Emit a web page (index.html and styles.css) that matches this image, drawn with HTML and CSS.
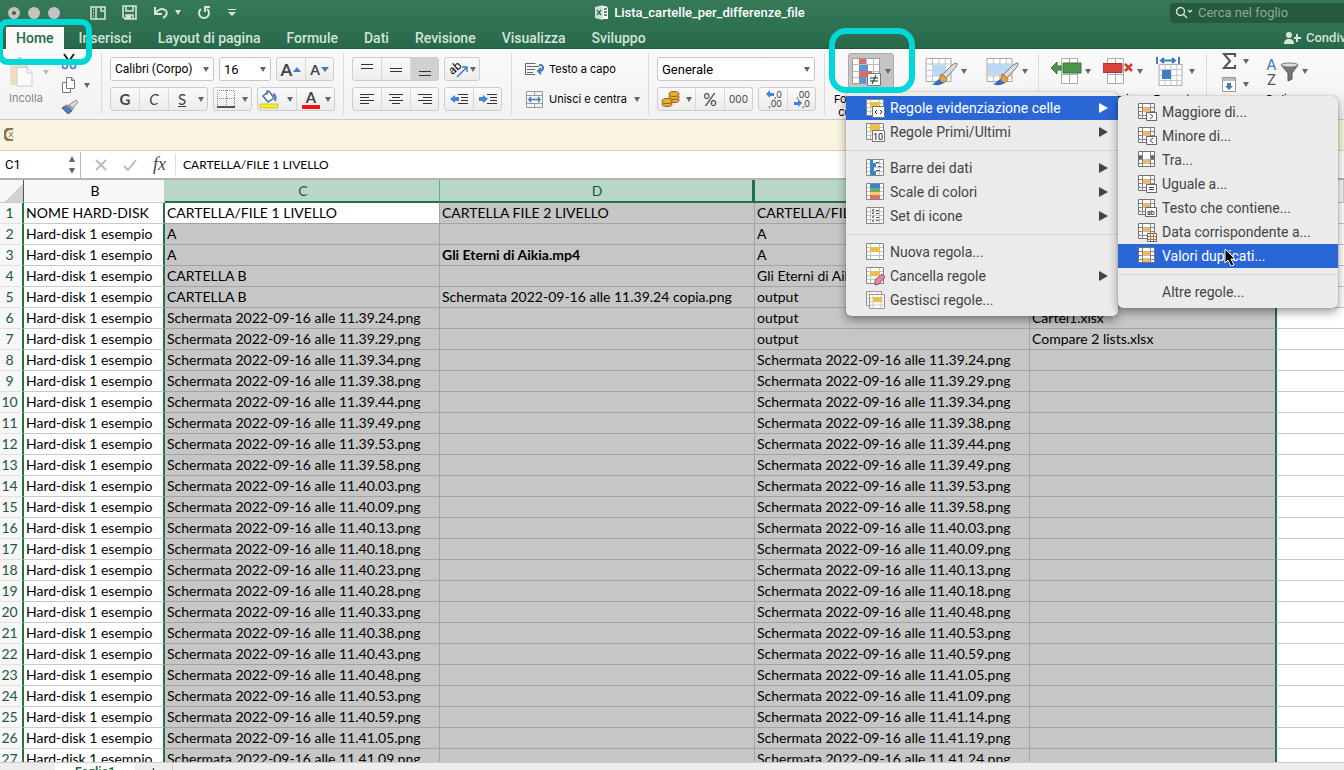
FILE: index.html
```html
<!DOCTYPE html>
<html lang="it">
<head>
  <meta charset="UTF-8" />
  <meta name="viewport" content="width=device-width, initial-scale=1.0"/>
  <title>Lista_cartelle_per_differenze_file</title>
  <link rel="stylesheet" href="styles.css">
</head>
<body>
  <!-- shared icon shapes -->
  <svg class="defs" width="0" height="0">
    <symbol id="cells" viewBox="0 0 18 17">
      <path d="M.5.5h17v16H.5z" fill="#fff" stroke="#858585"/>
      <path d="M4.500 1v15M13.500 1v15M1 4.500h16M1 8.500h16M1 12.500h16" stroke="#c4c4c4" fill="none"/>
    </symbol>
    <symbol id="rule" viewBox="0 0 19 18">
      <path d="M.5.5h16v15H.5z" fill="#fff" stroke="#747474"/>
      <path d="M4.500 1v14M12.500 1v14M1 4.500h15M1 8.500h15M1 12.500h15" stroke="#858585" fill="none"/>
      <path d="M5 4h7v5H5z" fill="#e8b970"/>
    </symbol>
    <symbol id="sheet" viewBox="0 0 28 26">
      <path d="M.5.5h27v25H.5z" fill="#fff" stroke="#9b9b9b"/>
      <path d="M7.500 1v24M14.500 1v24M21.500 1v24M1 6.500h26M1 13.500h26M1 19.500h26" stroke="#bcbcbc" fill="none"/>
    </symbol>
    <symbol id="brush" viewBox="0 0 26 24">
      <path d="M24 1c2 0 1 3-1 5l-9 10-4-3L20 3z" fill="#ddd" stroke="#777"/>
      <path d="M9 12l6 4c0 4-4 6-8 5z" fill="#e2a04a" stroke="#a9752e"/>
      <path d="M8 17c0 3 3 3 4 3-3 4-8 4-12 2 4-1 4-4 8-5z" fill="#2f6fc0"/>
    </symbol>
  </svg>

  <header class="titlebar">
    <div class="window-row">
      <div class="lights"><i class="dot active"></i><i class="dot"></i><i class="dot"></i></div>
      <div class="quick">
        <button aria-label="Raccolta"><svg width="16" height="14" fill="none" stroke="#d5e5dc" stroke-width="1.500"><path d="M1 1h14v12H1zM6 1v12M11 1v4h4M3 4h1M3 7h1M3 10h1"/></svg></button>
        <button aria-label="Salva"><svg width="15" height="15" fill="none" stroke="#d5e5dc" stroke-width="1.600"><path d="M1 1h13v13H3l-2-2zM4 1v5h7V1M4 14v-4h7v4"/><path d="M5 10h4v4H5z" fill="#d5e5dc" stroke="none"/></svg></button>
        <button class="undo" aria-label="Annulla"><svg width="16" height="13" fill="none" stroke="#d5e5dc" stroke-width="2"><path d="M2 1v7h7M2 8c3-5 7-6 10-4s2 6-2 8"/></svg><b class="caret"></b></button>
        <button aria-label="Ripeti"><svg width="14" height="14" fill="none" stroke="#d5e5dc" stroke-width="2"><path d="M4 3a5 5 0 1 0 6 0M13 1H8v5"/></svg></button>
        <button aria-label="Personalizza"><svg width="10" height="8" fill="#d5e5dc"><path d="M1 0h8v1H1zM1 3h8L5 7z"/></svg></button>
      </div>
      <div class="doc-title"><svg width="14" height="15"><path d="M5 1h6l2 2v11H5z" fill="#fff"/><path d="M0 2l8-2v15l-8-2z" fill="#cfe0d6"/><path d="M2 5l4 5M6 5l-4 5M9 4h3M9 7h3M9 10h3" stroke="#2b7350" stroke-width="1.300"/></svg><span>Lista_cartelle_per_differenze_file</span></div>
      <label class="search"><svg width="20" height="14" fill="none" stroke="#d5e5dc" stroke-width="1.400"><circle cx="5.500" cy="5.500" r="4"/><path d="M8 8l4 4M13 4l2 2 2-2"/></svg><input type="search" placeholder="Cerca nel foglio" aria-label="Cerca nel foglio"></label>
    </div>
    <nav class="tabs">
      <a href="#" class="current">Home</a>
      <a href="#">Inserisci</a>
      <a href="#">Layout di pagina</a>
      <a href="#">Formule</a>
      <a href="#">Dati</a>
      <a href="#">Revisione</a>
      <a href="#">Visualizza</a>
      <a href="#">Sviluppo</a>
      <button class="share"><svg width="17" height="12" fill="#d5e5dc"><circle cx="5" cy="3" r="3"/><path d="M0 12c0-4 2-5 5-5s5 1 5 5zM12 2h2v3h3v2h-3v3h-2V7h-2V5h2z"/></svg>Condividi</button>
    </nav>
  </header>

  <section class="ribbon">
    <div class="group clipboard">
      <button class="paste" disabled>
        <span><svg width="25" height="30"><rect x="1" y="3" width="18" height="25" rx="1" fill="#edddc5"/><path d="M6 5V2h2a2 2 0 0 1 5 0h2v3z" fill="#ccc"/><path d="M8 10.500h10l5 5V29H8z" fill="#fafafa" stroke="#ccc"/><path d="M18 10v6h5" fill="none" stroke="#ccc"/></svg><b class="caret"></b></span>
        Incolla
      </button>
      <div class="clip-tools">
        <button aria-label="Taglia"><svg width="16" height="17" fill="none"><path d="M3 1l7 10M13 1L6 11" stroke="#222" stroke-width="2"/><circle cx="4" cy="13" r="2.500" stroke="#3f7cc4" stroke-width="1.500"/><circle cx="12" cy="13" r="2.500" stroke="#3f7cc4" stroke-width="1.500"/></svg></button>
        <button aria-label="Copia"><svg width="16" height="16" fill="#fff" stroke="#777"><path d="M1.500 5.500h8v10h-8z"/><path d="M5.500.5h5l3 3v8h-8zM10.500.5v3h3"/></svg><b class="caret"></b></button>
        <button aria-label="Copia formato"><svg width="17" height="15"><path d="M15 0l2 2-5 6-4-3z" fill="#ddd" stroke="#888"/><path d="M6 4l7 5-2 2-7-5z" fill="#999"/><path d="M4 6l7 5-4 3-6-6z" fill="#4b83c4" stroke="#44658c"/></svg></button>
      </div>
    </div>

    <div class="group font-group">
      <div class="line">
        <label class="combo font-name"><select aria-label="Carattere"><option>Calibri (Corpo)</option></select></label>
        <label class="combo font-size"><select aria-label="Dimensione"><option>16</option></select></label>
        <div class="set"><button class="letter" aria-label="Aumenta">A<svg width="8" height="5"><path d="M0 5l4-5 4 5z" fill="#3f7cc4"/></svg></button><button class="letter small" aria-label="Riduci">A<svg width="8" height="5"><path d="M0 0h8L4 5z" fill="#3f7cc4"/></svg></button></div>
      </div>
      <div class="line">
        <div class="set"><button><b>G</b></button><button><i>C</i></button><button class="split"><u>S</u><b class="caret"></b></button></div>
        <div class="set"><button class="borders" aria-label="Bordi"><svg width="18" height="18" fill="none"><path d="M.5 17V.5h17V17M9.500 0v16M0 8.500h18" stroke="#888" stroke-dasharray="1 1"/><path d="M0 17h18" stroke="#222" stroke-width="1.500"/></svg><b class="caret"></b></button></div>
        <div class="set"><button class="split color" aria-label="Riempimento"><svg width="20" height="20"><path d="M4 7l6-5 5 7-6 4z" fill="#fff" stroke="#4c6f9c" stroke-width="1.500"/><path d="M14 5c3 1 3 4 2 7" stroke="#3f7cc4" stroke-width="2" fill="none"/><path d="M8 6V1" stroke="#555"/><path d="M1 15h18v4H1z" fill="#fcee21" stroke="#ccc24d"/></svg><b class="caret"></b></button><button class="split color" aria-label="Colore carattere"><span class="ink">A</span><b class="caret"></b></button></div>
      </div>
    </div>

    <div class="group align-group">
      <div class="line">
        <div class="set"><button aria-label="In alto"><svg class="lines" width="16" height="16"><path d="M2 3.500h12M2 7.500h12"/></svg></button><button aria-label="Al centro"><svg class="lines" width="16" height="16"><path d="M2 7.500h12M2 10.500h12"/></svg></button><button class="pressed" aria-label="In basso"><svg class="lines" width="16" height="16"><path d="M2 10.500h12M2 14.500h12"/></svg></button></div>
        <div class="set"><button class="orient" aria-label="Orientamento"><svg width="19" height="18"><text x="0" y="11" transform="rotate(-40 7 10)" class="svg-ab">ab</text><path d="M7 17l10-10M12 7h5v5" stroke="#3f7cc4" stroke-width="1.500" fill="none"/></svg><b class="caret"></b></button></div>
      </div>
      <div class="line">
        <div class="set"><button aria-label="Sinistra"><svg class="lines" width="16" height="12"><path d="M1 1.500h14M1 4.500h9M1 7.500h14M1 10.500h9"/></svg></button><button aria-label="Centra"><svg class="lines" width="16" height="12"><path d="M1 1.500h14M4 4.500h8M1 7.500h14M4 10.500h8"/></svg></button><button aria-label="Destra"><svg class="lines" width="16" height="12"><path d="M1 1.500h14M6 4.500h9M1 7.500h14M6 10.500h9"/></svg></button></div>
        <div class="set"><button aria-label="Riduci rientro"><svg class="lines" width="18" height="12"><path d="M8 1.500h10M11 4.500h7M11 7.500h7M8 10.500h10"/><path d="M0 6l5-4v2h4v4H5v2z" class="fill-blue"/></svg></button><button aria-label="Aumenta rientro"><svg class="lines" width="18" height="12"><path d="M8 1.500h10M11 4.500h7M11 7.500h7M8 10.500h10"/><path d="M9 6L4 2v2H0v4h4v2z" class="fill-blue"/></svg></button></div>
      </div>
    </div>

    <div class="group wrap-group">
      <button class="plain"><svg width="20" height="14" fill="none"><path d="M10 12.500H.5v-11h10M2 4.500h12M2 7.500h8M2 10.500h6" stroke="#666"/><path d="M14 3c5-1 6 6 0 6M16 6l-3 3 3 3" stroke="#3f7cc4" stroke-width="2"/></svg>Testo a capo</button>
      <button class="plain"><svg width="20" height="17" fill="none"><path d="M1.500.5h16v16h-16zM1 4.500h17M1 12.500h17M9.500 1v4M9.500 12v5" stroke="#999"/><path d="M4 8.500h11M6 6L4 8.500 6 11M13 6l2 2.500L13 11" stroke="#3f7cc4" stroke-width="1.500"/></svg>Unisci e centra<b class="caret"></b></button>
    </div>

    <div class="group number-group">
      <div class="line">
        <label class="combo number-format"><select aria-label="Formato numero"><option>Generale</option></select></label>
      </div>
      <div class="line">
        <div class="set"><button class="money" aria-label="Valuta"><svg width="19" height="16" fill="#e9ae35" stroke="#8f6214"><ellipse cx="13" cy="9" rx="5" ry="2.500"/><ellipse cx="13" cy="6" rx="5" ry="2.500"/><ellipse cx="13" cy="3" rx="5" ry="2.500"/><ellipse cx="6" cy="13" rx="5" ry="2.500"/><ellipse cx="6" cy="10" rx="5" ry="2.500"/></svg><b class="caret"></b></button><button class="percent">%</button><button class="zeros">000</button></div>
        <div class="set"><button class="decimal" aria-label="Aumenta decimali"><span><svg width="8" height="8"><path d="M0 4l4-4v3h4v3H4v2z" fill="#3f84d6"/></svg>,0</span><span>,00</span></button><button class="decimal" aria-label="Riduci decimali"><span>,00</span><span><svg width="8" height="8"><path d="M8 4L4 0v3H0v3h4v2z" fill="#3f84d6"/></svg>,0</span></button></div>
      </div>
    </div>

    <div class="group styles-group">
      <button class="big opened"><span><svg width="30" height="28"><use href="#sheet" width="28" height="26"/><path d="M7 1h7v5H7z M7 13h13v6H7z" fill="#e06a68"/><path d="M7 7h9v6H7zM7 19h7v6H7z" fill="#5b95da"/><path d="M15.500 15.500h13v12h-13z" fill="#fff" stroke="#777"/><path d="M18 20h8M18 23h8M24 17l-4 9" stroke="#222"/></svg><b class="caret"></b></span>Formattazione<br>condizionale</button>
      <button class="big"><span><svg width="33" height="28"><use href="#sheet" width="27" height="24"/><path d="M7 7h14v11H7z" fill="#bcd9f4"/><use href="#brush" x="7" y="4" width="26" height="24"/></svg><b class="caret"></b></span></button>
      <button class="big"><span><svg width="33" height="28"><use href="#sheet" width="27" height="24"/><path d="M2 6h24v11H2z" fill="#bcd9f4"/><use href="#brush" x="7" y="4" width="26" height="24"/></svg><b class="caret"></b></span></button>
    </div>

    <div class="group cells-group">
      <button class="big"><span><svg width="31" height="27"><path d="M10.500.5h16v25h-16zM18.500 0v26M10 16.500h17" fill="#fff" stroke="#aaa"/><path d="M12 5h18v10H12zM0 10l6-6v4h4v4H6v4z" fill="#4d934a" stroke="#35733a"/></svg><b class="caret"></b></span>Inserisci</button>
      <button class="big"><span><svg width="31" height="27"><path d="M4.500.5h16v25h-16zM12.500 0v26M4 16.500h17" fill="#fff" stroke="#aaa"/><path d="M0 5.500h19v9H0z" fill="#d9443d" stroke="#a83430"/><path d="M22 6l7 7M29 6l-7 7" stroke="#d03c35" stroke-width="2.500"/></svg><b class="caret"></b></span>Elimina</button>
      <button class="big"><span><svg width="30" height="29"><use href="#sheet" y="7" width="29" height="22"/><path d="M6 13h9v9H6z" fill="#3f7cc4"/><path d="M1 0v7M23 0v7M5 3.500h14M8 1L5 3.500 8 6M16 1l3 2.500L16 6" stroke="#3f7cc4" stroke-width="2" fill="none"/></svg><b class="caret"></b></span>Formato</button>
    </div>

    <div class="group edit-group">
      <div class="stack">
        <button aria-label="Somma"><svg width="14" height="16"><path d="M13 4V1H2l6 7-6 7h11v-3" fill="none" stroke="#555" stroke-width="2"/></svg><b class="caret"></b></button>
        <button aria-label="Riempi"><svg width="14" height="15"><path d="M.5.5h13v14H.5z" fill="#fff" stroke="#999"/><path d="M1 1h12v3H1z" fill="#bbb"/><path d="M7 13l-4-4h2V6h4v3h2z" fill="#3f7cc4"/></svg><b class="caret"></b></button>
      </div>
      <button class="big"><span><span class="az"><em>A</em>Z</span><svg width="19" height="20"><path d="M1 3l7 8v8l4-2v-6l6-8z" fill="#777" stroke="#555"/><ellipse cx="9.500" cy="3" rx="8.500" ry="2" fill="#ddd" stroke="#777"/></svg><b class="caret"></b></span>Ordina e<br>filtra</button>
    </div>
  </section>

  <div class="notice">
    <svg width="10" height="13"><path d="M9 1a6 6 0 1 0 0 11" fill="none" stroke="#8d7551" stroke-width="3"/><path d="M5 4l4 5M9 4L5 9" stroke="#8d7551"/></svg>
  </div>

  <div class="formula-bar">
    <input class="cell-name" value="C1" aria-label="Casella nome">
    <div class="stepper"><i class="up"></i><i class="down"></i></div>
    <button aria-label="Annulla"><svg width="12" height="12"><path d="M1 1l10 10M11 1L1 11" stroke="#bbb" stroke-width="2"/></svg></button>
    <button aria-label="Conferma"><svg width="14" height="12"><path d="M1 7l4 4 8-10" stroke="#bbb" stroke-width="2" fill="none"/></svg></button>
    <button class="fx">fx</button>
    <input class="formula" value="CARTELLA/FILE 1 LIVELLO" aria-label="Barra della formula">
  </div>

  <main class="grid">
    <table>
      <colgroup><col class="w-num"><col class="w-b"><col class="w-c"><col class="w-d"><col class="w-e"><col class="w-f"><col></colgroup>
      <thead><tr><th class="corner"></th><th>B</th><th class="sel">C</th><th class="sel">D</th><th class="sel">E</th><th class="sel">F</th><th>G</th></tr></thead>
      <tbody id="rows"></tbody>
    </table>
  </main>

  <footer class="sheets"><a href="#">Foglio1</a><button>+</button></footer>

  <ul class="menu main-menu">
    <li class="on"><svg width="19" height="19"><use href="#cells" width="18" height="17"/><path d="M4 3h10v6H4z" fill="#ecc04f"/><path d="M6.500 7.500h12v11h-12z" fill="#fff" stroke="#777"/><path d="M11 11l-2 2 2 2M14 11l2 2-2 2" stroke="#222" fill="none"/></svg><button>Regole evidenziazione celle</button></li>
    <li class="more"><svg width="19" height="19"><use href="#cells" width="18" height="17"/><path d="M4 1h10v7H4z" fill="#ecc04f"/><path d="M6.500 7.500h12v11h-12z" fill="#fff" stroke="#777"/><text x="7" y="17" class="svg-ten">10</text></svg><button>Regole Primi/Ultimi</button></li>
    <li class="rule"></li>
    <li class="more"><svg width="19" height="19"><use href="#cells" width="18" height="17"/><path d="M4 1h3v3h3v4H8v4h2v4H4z" fill="#3785c8"/><path d="M10 3.500h3M12 7.500h3M10 11.500h4" stroke="#555"/></svg><button>Barre dei dati</button></li>
    <li class="more"><svg width="19" height="19"><use href="#cells" width="18" height="17"/><path d="M4 1h10v4H4z" fill="#3785c8"/><path d="M4 5h10v4H4z" fill="#6ca866"/><path d="M4 9h10v3H4z" fill="#f2cf68"/><path d="M4 12h10v4H4z" fill="#dd6d67"/></svg><button>Scale di colori</button></li>
    <li class="more"><svg width="19" height="19"><use href="#cells" width="18" height="17"/><path d="M6 2h2v2H6zM6 9h2v2H6z" fill="#4ca760"/><path d="M6 5h2v2H6zM6 13h2v2H6z" fill="#dc5f59"/><path d="M10 3.500h3M10 6.500h3M10 10.500h3M10 13.500h3" stroke="#555"/></svg><button>Set di icone</button></li>
    <li class="rule"></li>
    <li><svg width="19" height="19"><use href="#cells" width="18" height="17"/><path d="M4 4h10v5H4z" fill="#ecc04f"/></svg><button>Nuova regola...</button></li>
    <li class="more"><svg width="20" height="19"><use href="#cells" width="18" height="17"/><path d="M4 4h10v5H4z" fill="#ecc04f"/><path d="M9 13l7-6 3 3-6 7-4 1z" fill="#dc8d9c" stroke="#954d5c"/></svg><button>Cancella regole</button></li>
    <li><svg width="20" height="19"><use href="#cells" width="16" height="15"/><use href="#cells" x="3" y="3" width="16" height="15"/><path d="M7 6h9v5H7z" fill="#ecc04f"/></svg><button>Gestisci regole...</button></li>
  </ul>

  <ul class="menu sub-menu">
    <li><svg width="19" height="19"><use href="#rule" width="19" height="18"/><path d="M8.500 9.500h10v8h-10z" fill="#fff" stroke="#666"/><path d="M12 11l3 2.500-3 2.500" stroke="#444" fill="none"/></svg><button>Maggiore di...</button></li>
    <li><svg width="19" height="19"><use href="#rule" width="19" height="18"/><path d="M8.500 9.500h10v8h-10z" fill="#fff" stroke="#666"/><path d="M15 11l-3 2.500 3 2.500" stroke="#444" fill="none"/></svg><button>Minore di...</button></li>
    <li><svg width="19" height="19"><use href="#rule" width="19" height="18"/><path d="M5 4h7v4H5z" fill="#fff"/><path d="M5 9h7v4H5z" fill="#e8b970"/><path d="M1 5h3v3H1zM13 5h3v3h-3z" fill="#3e6ca8"/></svg><button>Tra...</button></li>
    <li><svg width="19" height="19"><use href="#rule" width="19" height="18"/><path d="M8.500 9.500h10v8h-10z" fill="#fff" stroke="#666"/><path d="M11 12.500h5M11 14.500h5" stroke="#444"/></svg><button>Uguale a...</button></li>
    <li><svg width="19" height="19"><use href="#rule" width="19" height="18"/><path d="M7.500 8.500h11v9h-11z" fill="#fff" stroke="#666"/><text x="9" y="16" class="svg-tiny">ab</text></svg><button>Testo che contiene...</button></li>
    <li><svg width="19" height="19"><use href="#rule" width="19" height="18"/><path d="M9.500 10.500h9v8h-9z" fill="#fff" stroke="#666"/><path d="M12.500 11v7M15.500 11v7M10 13.500h8M10 16.500h8" stroke="#b5713b"/></svg><button>Data corrispondente a...</button></li>
    <li class="on"><svg width="19" height="19"><use href="#rule" width="19" height="18"/><path d="M5 11h7v4H5z" fill="#e8b970"/></svg><button>Valori duplicati...</button></li>
    <li class="rule"></li>
    <li><svg width="19" height="19"></svg><button>Altre regole...</button></li>
  </ul>

  <div class="mark mark-home"></div>
  <div class="mark mark-format"></div>
  <svg class="pointer" width="12" height="18"><path d="M1 1v14l3-3 3 6 3-1-3-6h4z" fill="#000" stroke="#fff"/></svg>

  <script src="rows.js"></script>
</body>
</html>
```
FILE: styles.css
```css
* {
  box-sizing: border-box;
}

body {
  margin: 0;
  height: 100vh;
  display: flex;
  flex-direction: column;
  overflow: hidden;
  background: #fff;
  color: #000;
  font-family: Roboto, "Liberation Sans", sans-serif;
  font-size: 13px;
}

button,
input,
select {
  font: inherit;
  color: inherit;
  background: none;
  border: none;
  padding: 0;
  margin: 0;
}

svg {
  display: block;
  flex: none;
}

.defs {
  position: absolute;
}

.caret {
  flex: none;
  border: 3px solid transparent;
  border-top: 5px solid #666;
  border-bottom: none;
}

/* title bar and tabs */
.titlebar {
  background: linear-gradient(#367a5a, #28694a);
  border-bottom: 1px solid #205a3d;
  height: 49px;
  flex: none;
}

.window-row {
  display: grid;
  grid-template-columns: 90px 140px 1fr auto 1fr 174px;
  height: 25px;
  align-items: center;
}

.lights {
  display: flex;
  gap: 8px;
  padding-left: 8px;
}

.dot {
  width: 12px;
  height: 12px;
  border-radius: 50%;
  background: #c4c4c4;
}

.dot.active {
  border: 4px solid #c4c4c4;
  background: #555;
}

.quick {
  display: flex;
  align-items: center;
  gap: 16px;
}

.quick button {
  display: flex;
  align-items: center;
}

.quick .caret {
  border-top-color: #d5e5dc;
  margin-left: 6px;
}

.doc-title {
  grid-column: 4;
  display: flex;
  align-items: center;
  gap: 5px;
  color: #fff;
  font-weight: 500;
}

.search {
  grid-column: 6;
  display: flex;
  align-items: center;
  gap: 3px;
  height: 20px;
  padding-left: 5px;
  background: #27593f;
  border-radius: 4px 0 0 4px;
}

.search input {
  min-width: 0;
}

.search input::placeholder {
  color: #8bab9a;
}

.tabs {
  display: flex;
  height: 24px;
  padding: 2px 0 0 6px;
  overflow: hidden;
}

.tabs a,
.share {
  color: #d3e4da;
  font-size: 14px;
  font-weight: 500;
  line-height: 22px;
  padding: 0 13px;
  text-decoration: none;
  white-space: nowrap;
}

.tabs .current {
  background: #fafafa;
  color: #1f6b47;
  padding: 0 10px;
  margin-right: 2px;
}

.share {
  display: flex;
  align-items: center;
  gap: 5px;
  width: 60px;
  margin-left: auto;
  padding: 0;
  font-size: 13px;
}

/* ribbon */
.ribbon {
  display: flex;
  flex: none;
  height: 71px;
  background: linear-gradient(#fafafa, #f2f2f2);
  border-bottom: 1px solid #c8c8c8;
  overflow: hidden;
}

.group {
  position: relative;
  flex: none;
  display: flex;
  flex-direction: column;
  gap: 6px;
  padding: 8px 9px 0 9px;
}

.group::after {
  content: "";
  position: absolute;
  right: 0;
  top: 4px;
  bottom: 4px;
  border-right: 1px solid #dcdcdc;
}

.line,
.set {
  display: flex;
}

.line {
  gap: 5px;
}

.set {
  height: 24px;
  border: 1px solid #cdcdcd;
  border-radius: 3px;
  background: linear-gradient(#fafafa, #ececec);
  color: #444;
  font-family: Lato, sans-serif;
  font-size: 15px;
}

.set button {
  width: 29px;
  display: flex;
  align-items: center;
  justify-content: center;
}

.set button + button {
  border-left: 1px solid #d8d8d8;
}

.set button.pressed {
  background: #d0d0d0;
}

.set button:first-child,
.set button:last-child {
  width: 28px;
}

.set .split:last-child {
  width: 39px;
  justify-content: space-between;
  padding: 0 3px 0 9px;
}

.set .color:first-child,
.set .color:last-child {
  width: 38px;
  justify-content: space-between;
  padding: 0 3px 0 1px;
}

.set .color:last-child {
  padding-left: 5px;
}

.set .borders:first-child,
.set .money:first-child {
  width: 37px;
  justify-content: space-between;
  padding: 0 3px;
}

.set .orient:first-child {
  width: 34px;
  justify-content: space-between;
  padding: 0 3px 0 5px;
}

.set .letter {
  gap: 1px;
  font-size: 17px;
  font-weight: 700;
}

.set .small {
  font-size: 14px;
}

.set .percent {
  font-size: 17px;
}

.set .zeros {
  font-family: Inter, sans-serif;
  font-size: 10px;
}

.set .decimal {
  flex-direction: column;
  font-family: Inter, sans-serif;
  font-size: 9px;
  line-height: 9px;
  align-items: flex-end;
  padding-right: 5px;
}

.decimal span {
  display: flex;
}

.ink {
  border-bottom: 4px solid #f01414;
  width: 18px;
  line-height: 15px;
  font-weight: 700;
}

.combo {
  position: relative;
  height: 24px;
  border: 1px solid #c6c6c6;
  border-radius: 3px;
  background: #fff;
}

.combo select {
  appearance: none;
  width: 100%;
  height: 22px;
  padding-left: 4px;
}

.combo::after {
  content: "";
  position: absolute;
  right: 4px;
  top: 9px;
  border: 3px solid transparent;
  border-top: 5px solid #666;
  border-bottom: none;
}

.font-name {
  width: 104px;
  font-size: 12px;
}

.font-size {
  width: 52px;
}

.number-format {
  width: 158px;
}

.lines {
  stroke: #333;
  fill: none;
}

.fill-blue {
  fill: #3f84d6;
  stroke: none;
}

.clipboard {
  flex-direction: row;
  width: 102px;
}

.paste {
  width: 46px;
  color: #858585;
  font-family: Inter, sans-serif;
  font-size: 11px;
  line-height: 13px;
  text-align: left;
  align-self: flex-start;
}

.paste span {
  display: flex;
  align-items: center;
  gap: 9px;
  margin-bottom: 5px;
}

.paste .caret {
  border-top-color: #bbb;
}

.clip-tools {
  display: flex;
  flex-direction: column;
  gap: 7px;
  margin-top: -4px;
}

.clip-tools button,
.stack button {
  display: flex;
  align-items: center;
  gap: 7px;
}

.font-group {
  width: 242px;
  padding-left: 8px;
}

.align-group {
  width: 168px;
  padding-left: 8px;
}

.wrap-group {
  width: 137px;
  padding-left: 13px;
}

.plain {
  display: flex;
  align-items: center;
  gap: 4px;
  height: 24px;
  font-family: Inter, sans-serif;
  font-size: 11px;
  white-space: nowrap;
}

.plain .caret {
  margin-left: 3px;
}

.number-group {
  width: 176px;
  padding-left: 8px;
}

.styles-group {
  flex-direction: row;
  width: 214px;
  gap: 15px;
  padding: 4px 9px 0 9px;
}

.big {
  display: flex;
  flex-direction: column;
  align-items: center;
  width: 46px;
  font-family: Inter, sans-serif;
  font-size: 11px;
  line-height: 13px;
  white-space: nowrap;
}

.big > span {
  display: flex;
  align-items: center;
  justify-content: center;
  gap: 3px;
  width: 46px;
  height: 37px;
  margin-bottom: 3px;
}

.opened {
  width: 76px;
}

.opened > span {
  background: #c4c4c4;
  border: 1px solid #aaa;
  border-radius: 3px;
}

.cells-group {
  flex-direction: row;
  width: 168px;
  padding-top: 4px;
}

.edit-group {
  flex-direction: row;
  flex: 1;
  padding: 4px 0 0 15px;
  gap: 15px;
}

.edit-group::after {
  display: none;
}

.stack {
  display: flex;
  flex-direction: column;
  gap: 8px;
}

.az {
  display: flex;
  flex-direction: column;
  font-size: 15px;
  line-height: 15px;
  color: #555;
}

.az em {
  font-style: normal;
  color: #3f7cc4;
}

/* message strip and formula bar */
.notice {
  flex: none;
  height: 31px;
  padding: 8px 4px;
  background: #f8f4e0;
  border-bottom: 1px solid #d8d0b4;
}

.formula-bar {
  flex: none;
  display: flex;
  align-items: center;
  height: 29px;
  border-bottom: 2px solid #b4b4b4;
}

.cell-name {
  width: 64px;
  padding-left: 5px;
}

.stepper {
  width: 17px;
  height: 26px;
  display: flex;
  flex-direction: column;
  justify-content: center;
  align-items: center;
  gap: 6px;
  border-right: 1px solid #bbb;
  margin-right: 14px;
}

.stepper i {
  border: 3px solid transparent;
}

.stepper .up {
  border-bottom: 6px solid #666;
  border-top: none;
}

.stepper .down {
  border-top: 6px solid #666;
  border-bottom: none;
}

.formula-bar button {
  margin-right: 16px;
}

.formula-bar .fx {
  font-family: "Liberation Serif", serif;
  font-style: italic;
  font-size: 18px;
  width: 23px;
  margin-right: 0;
  text-align: left;
  color: #444;
  border-right: 1px solid #ddd;
}

.formula {
  flex: 1;
  padding-left: 7px;
  font-family: Lato, sans-serif;
  font-size: 12px;
}

/* cells */
.grid {
  flex: 1;
  min-height: 0;
  overflow: hidden;
}

table {
  width: 100%;
  table-layout: fixed;
  border-collapse: separate;
  border-spacing: 0;
  font-family: Lato, "Liberation Sans", sans-serif;
  font-size: 14px;
}

.w-num { width: 24px; }
.w-b { width: 141px; }
.w-c { width: 275px; }
.w-d { width: 315px; }
.w-e { width: 275px; }
.w-f { width: 247px; }

th,
td {
  height: 21px;
  padding: 0 0 0 2px;
  line-height: 20px;
  white-space: nowrap;
  overflow: hidden;
  border-right: 1px solid #c9c9c9;
  border-bottom: 1px solid #c9c9c9;
}

th {
  font-weight: 400;
  text-align: center;
  background: #f7f7f7;
}

thead th {
  height: 23px;
}

thead .sel {
  background: #b8d7c7;
  color: #24563d;
  border-bottom: 2px solid #217346;
  border-right-color: #63ad83;
}

thead .sel:nth-child(4) {
  border-right: 3px solid #217346;
}

.corner {
  background: linear-gradient(135deg, #f7f7f7 58%, #d3d3d3 58%);
  border-right: 1px solid #555;
}

tbody th {
  padding: 0 3px 0 0;
  color: #24563d;
  border-right: 2px solid #217346;
  border-bottom-color: #e2e2e2;
}

tbody td:nth-child(2) {
  border-right: 2px solid #217346;
}

tbody td:last-child {
  border-right: none;
}

.picked {
  background: #c6c6c6;
  border-color: #a4a4a4;
}

.picked:nth-child(6) {
  border-right: 2px solid #217346;
}

tbody tr:first-child td:nth-child(3) {
  background: #fff;
}

.strong {
  font-weight: 700;
}

.sheets {
  flex: none;
  display: flex;
  height: 8px;
  overflow: hidden;
  padding-left: 55px;
  background: #ededed;
  border-top: 1px solid #ccc;
  font-size: 12px;
  line-height: 18px;
}

.sheets a {
  width: 80px;
  background: #fff;
  color: #217346;
  font-weight: 700;
  text-align: center;
  text-decoration: none;
}

.sheets button {
  width: 38px;
  border-right: 1px solid #ccc;
}

/* open menus */
.menu {
  position: absolute;
  margin: 0;
  padding: 4px 0;
  list-style: none;
  background: #ebebeb;
  border-radius: 5px;
  box-shadow: 0 4px 10px rgba(0, 0, 0, 0.4), 0 0 1px rgba(0, 0, 0, 0.5);
  color: #444;
  font-size: 14px;
}

.main-menu {
  left: 846px;
  top: 92px;
  width: 272px;
}

.sub-menu {
  left: 1118px;
  top: 96px;
  width: 220px;
}

.menu li {
  display: flex;
  align-items: center;
  gap: 5px;
  height: 24px;
  padding: 0 10px 0 20px;
}

.menu svg {
  width: 19px;
}

.menu .on {
  background: #2a66d5;
  color: #fff;
}

.main-menu .on::after,
.menu .more::after {
  content: "";
  margin-left: auto;
  border: 5px solid transparent;
  border-left: 9px solid #444;
  border-right: none;
}

.main-menu .on::after {
  border-left-color: #fff;
}

.menu .rule {
  height: 12px;
  padding: 0;
}

.menu .rule::before {
  content: "";
  flex: 1;
  border-top: 1px solid #d6d6d6;
}

.svg-ten {
  font: 9px Roboto, sans-serif;
}

.svg-tiny {
  font: 7px Roboto, sans-serif;
}

.svg-ab {
  font: 12px Roboto, sans-serif;
}

/* tutorial highlights */
.mark {
  position: absolute;
  border: 6px solid #00d8d8;
}

.mark-home {
  left: -3px;
  top: 19px;
  width: 95px;
  height: 46px;
  border-radius: 11px;
}

.mark-format {
  left: 829px;
  top: 28px;
  width: 86px;
  height: 65px;
  border-radius: 17px;
}

.pointer {
  position: absolute;
  left: 1224px;
  top: 248px;
}
```
FILE: rows.js
```js
const shot = (time) => `Schermata 2022-09-16 alle 11.${time}.png`;

const times = ['39.24', '39.29', '39.34', '39.38', '39.44', '39.49', '39.53', '39.58',
  '40.03', '40.09', '40.13', '40.18', '40.23', '40.28', '40.33', '40.38',
  '40.43', '40.48', '40.53', '40.59', '41.05', '41.09'];

const laterTimes = ['39.24', '39.29', '39.34', '39.38', '39.44', '39.49', '39.53', '39.58',
  '40.03', '40.09', '40.13', '40.18', '40.48', '40.53', '40.59', '41.05',
  '41.09', '41.14', '41.19', '41.24'];

const colC = ['CARTELLA/FILE 1 LIVELLO', 'A', 'A', 'CARTELLA B', 'CARTELLA B', ...times.map(shot)];
const colD = { 0: 'CARTELLA FILE 2 LIVELLO', 2: 'Gli Eterni di Aikia.mp4', 4: shot('39.24 copia').replace(' copia.png', ' copia.png') };
const colE = ['CARTELLA/FILE 1 LIVELLO', 'A', 'A', 'Gli Eterni di Aikia.mp4', 'output', 'output', 'output',
  ...laterTimes.map(shot)];
const colF = { 5: 'Cartel1.xlsx', 6: 'Compare 2 lists.xlsx' };

const body = document.getElementById('rows');

for (let i = 0; i < 27; i++) {
  const row = body.insertRow();
  const num = document.createElement('th');
  num.textContent = i + 1;
  row.append(num);

  const first = i === 0 ? 'NOME HARD-DISK' : 'Hard-disk 1 esempio';
  [first, colC[i], colD[i], colE[i], colF[i], ''].forEach((text, col) => {
    const cell = row.insertCell();
    cell.textContent = text || '';
    if (col > 0 && col < 5) cell.className = 'picked';
    if (col === 2 && i === 2) cell.classList.add('strong');
  });
}
```
